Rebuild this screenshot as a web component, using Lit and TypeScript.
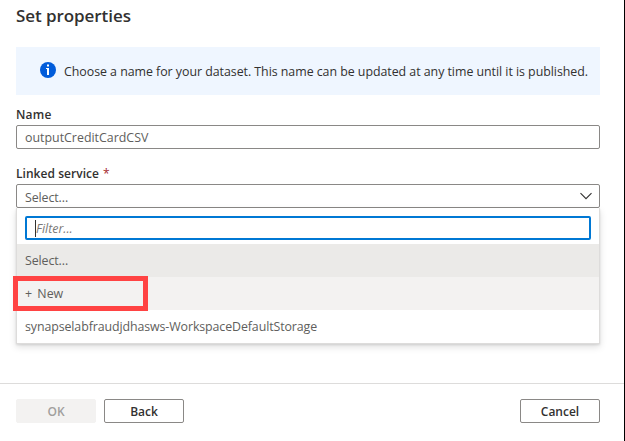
import { LitElement, html, css } from "lit";
import { customElement } from "lit/decorators.js";

@customElement("app-root")
export class AppRoot extends LitElement {
  static styles = css`
    :host {
      display: flex;
      flex-direction: column;
      box-sizing: border-box;
      width: 625px;
      height: 441px;
      overflow: hidden;
      background: #fff;
      border-right: 1px solid #000;
      font-family: "Open Sans", "Noto Sans", sans-serif;
      font-size: 12.4px;
      color: #323130;
    }
    * { box-sizing: border-box; }
    .body { flex: none; height: 383px; padding: 0 24px 0 16px; }
    .title {
      margin: 0;
      height: 47px;
      line-height: 32px;
      font-size: 17px;
      font-weight: 600;
      letter-spacing: -0.07px;
      white-space: nowrap;
    }
    .banner {
      display: flex;
      align-items: center;
      height: 48px;
      padding-left: 24px;
      gap: 8px;
      background: #eff6ff;
      white-space: nowrap;
    }
    .banner svg { display: block; margin-top: -2px; }
    .info { letter-spacing: -0.04px; }
    .label {
      display: flex;
      gap: 4px;
      height: 20px;
      line-height: 20px;
      font-weight: 600;
      font-size: 12px;
    }
    .name { margin-top: 10px; letter-spacing: 0.2px; }
    .linked { margin-top: 15px; letter-spacing: 0.04px; }
    .req { color: #a4262c; font-weight: 400; }
    .field {
      display: flex;
      align-items: center;
      justify-content: space-between;
      height: 24px;
      padding: 0 7px 0 8px;
      border: 1px solid #8a8886;
      border-radius: 2px;
      color: #605e5c;
    }
    .field .pick { padding-top: 2px; }
    .pick { letter-spacing: -0.1px; }
    .panel {
      position: relative;
      height: 136px;
      padding-top: 8px;
      border: 1px solid #dddcdb;
      border-top: 0;
      background: #fff;
      box-shadow: 0 3px 7px rgba(0, 0, 0, 0.13), 0 1px 2px rgba(0, 0, 0, 0.1);
      color: #605e5c;
    }
    .filter {
      display: flex;
      align-items: center;
      height: 24px;
      margin: 0 8px 4px;
      padding-left: 8px;
      border: 2px solid #0078d4;
      border-radius: 2px;
      font-style: italic;
      color: #7a7876;
    }
    .caret { width: 1px; height: 17px; background: #323130; }
    .option { height: 33px; line-height: 33px; padding-left: 8px; }
    .selected { background: #ebeae8; }
    .hover { background: #f3f2f1; }
    .new { word-spacing: 2px; }
    .store { letter-spacing: -0.1px; }
    .mark {
      position: absolute;
      left: -4px;
      top: 68px;
      width: 135px;
      height: 35px;
      border: 5px solid #ff4343;
    }
    .footer {
      display: flex;
      gap: 8px;
      flex: 1;
      padding: 15px 24px 0 16px;
      border-top: 1px solid #dddcdb;
    }
    .btn {
      display: flex;
      align-items: center;
      justify-content: center;
      width: 80px;
      height: 24px;
      border: 1px solid #8a8886;
      border-radius: 2px;
      background: #fff;
      font-weight: 600;
      font-size: 12px;
    }
    .off { background: #f3f2f1; border-color: #f3f2f1; color: #a19f9d; }
    .end { margin-left: auto; }
  `;

  render() {
    return html`
      <div class="body">
        <h1 class="title">Set properties</h1>
        <div class="banner">
          <svg width="16" height="16" viewBox="0 0 16 16">
            <circle cx="8" cy="8" r="8" fill="#015cda" />
            <path d="M7 2.500h2v2H7zM6 6h3v7H7V7H6z" fill="#fff" />
          </svg>
          <span class="info">Choose a name for your dataset. This name can be updated at any time until it is published.</span>
        </div>
        <div class="label name"><span>Name</span></div>
        <div class="field"><span>outputCreditCardCSV</span></div>
        <div class="label linked"><span>Linked service</span><span class="req">*</span></div>
        <div class="field">
          <span class="pick">Select...</span>
          <svg width="12" height="8" viewBox="0 0 12 8">
            <path d="M.5 1.200 6 6.700l5.500-5.500" fill="none" stroke="#323130" stroke-width="1.100" />
          </svg>
        </div>
        <div class="panel">
          <div class="filter"><span class="caret"></span><span>Filter...</span></div>
          <div class="option selected"><span class="pick">Select...</span></div>
          <div class="option hover"><span class="new">+ New</span></div>
          <div class="option"><span class="store">synapselabfraudjdhasws-WorkspaceDefaultStorage</span></div>
          <div class="mark"></div>
        </div>
      </div>
      <div class="footer">
        <div class="btn off">OK</div>
        <div class="btn">Back</div>
        <div class="btn end">Cancel</div>
      </div>
    `;
  }
}
